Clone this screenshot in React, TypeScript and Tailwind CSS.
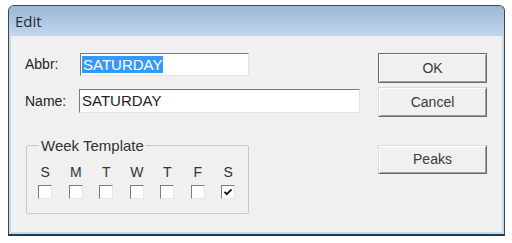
import React from "react";

const days = ["S", "M", "T", "W", "T", "F", "S"];

function Button({ label, primary, className = "" }: { label: string; primary?: boolean; className?: string }) {
  return (
    <div
      className={`w-[109px] flex items-center justify-center bg-[#f0f0f0] text-[14px] text-[#3a3a3a] ${
        primary
          ? "border border-[#6a6a6a] shadow-[inset_1px_1px_0_#ffffff,inset_-1px_-1px_0_#a0a0a0]"
          : "border border-t-[#dcdcdc] border-l-[#dcdcdc] border-r-[#6a6a6a] border-b-[#6a6a6a] shadow-[inset_1px_1px_0_#ffffff,inset_-1px_-1px_0_#a0a0a0]"
      } ${className}`}
    >
      {label}
    </div>
  );
}

function CheckBox({ checked }: { checked?: boolean }) {
  return (
    <div className="w-[14px] h-[14px] bg-white border border-t-[#7d7d7d] border-l-[#7d7d7d] border-r-[#e6e6e6] border-b-[#e6e6e6] flex items-center justify-center">
      {checked && (
        <svg width="10" height="10" viewBox="0 0 10 10">
          <path d="M1.5 4.8 L3.8 7.2 L8.5 2.4" fill="none" stroke="#111" strokeWidth="1.8" />
        </svg>
      )}
    </div>
  );
}

export default function App() {
  return (
    <div className="w-[512px] h-[243px] bg-white pt-[5px] pl-[8px] font-['Liberation_Sans',Arial,sans-serif]">
      <div className="w-[497px] h-[231px] flex flex-col rounded-t-[6px] border border-[#3a4650] border-b-2 border-b-[#1f3d47] bg-[#c3d9ee] overflow-hidden">
        {/* Title bar */}
        <div className="h-[30px] shrink-0 bg-gradient-to-b from-[#9ab7d6] to-[#c2d7ec] flex items-center pl-[6px]">
          <span className="text-[15px] text-[#1f2a36] font-['Open_Sans',sans-serif]">Edit</span>
        </div>

        {/* Body */}
        <div className="flex-1 px-[2px] pb-[2px] flex">
          <div className="flex-1 bg-[#f0f0f0] flex pl-[14px] pt-[17px]">
            {/* Left column */}
            <div className="w-[353px] flex flex-col">
              <div className="flex items-center h-[23px]">
                <span className="w-[55px] text-[14px] text-[#222]">Abbr:</span>
                <div className="w-[169px] h-[23px] bg-white border border-t-[#7a7a7a] border-l-[#7a7a7a] border-r-[#e3e3e3] border-b-[#e3e3e3] flex items-center pl-[1px]">
                  <span className="bg-[#3399ff] text-white text-[15px] leading-[17px] px-[1px]">SATURDAY</span>
                </div>
              </div>
              <div className="flex items-center h-[24px] mt-[13px]">
                <span className="w-[54px] text-[14px] text-[#222]">Name:</span>
                <div className="w-[281px] h-[24px] bg-white border border-t-[#7a7a7a] border-l-[#7a7a7a] border-r-[#e3e3e3] border-b-[#e3e3e3] flex items-center pl-[2px]">
                  <span className="text-[15px] text-[#222]">SATURDAY</span>
                </div>
              </div>
              <fieldset className="ml-[1px] mt-[24px] w-[223px] border border-[#c4cace] rounded-[2px] pl-[3px] pt-[10px] pb-[14px]">
                <legend className="ml-[9px] px-[2px] text-[15px] leading-[17px] text-[#333]">Week Template</legend>
                <div className="grid grid-cols-[repeat(7,30.5px)]">
                  {days.map((d, i) => (
                    <span key={i} className="text-center text-[14px] leading-[17px] text-[#333]">
                      {d}
                    </span>
                  ))}
                </div>
                <div className="grid grid-cols-[repeat(7,30.5px)] mt-[4px]">
                  {days.map((_, i) => (
                    <div key={i} className="flex justify-center">
                      <CheckBox checked={i === 6} />
                    </div>
                  ))}
                </div>
              </fieldset>
            </div>

            {/* Right column */}
            <div className="flex flex-col">
              <Button label="OK" primary className="h-[30px]" />
              <Button label="Cancel" className="h-[30px] mt-[4px]" />
              <Button label="Peaks" className="h-[29px] mt-[28px]" />
            </div>
          </div>
        </div>
      </div>
    </div>
  );
}
